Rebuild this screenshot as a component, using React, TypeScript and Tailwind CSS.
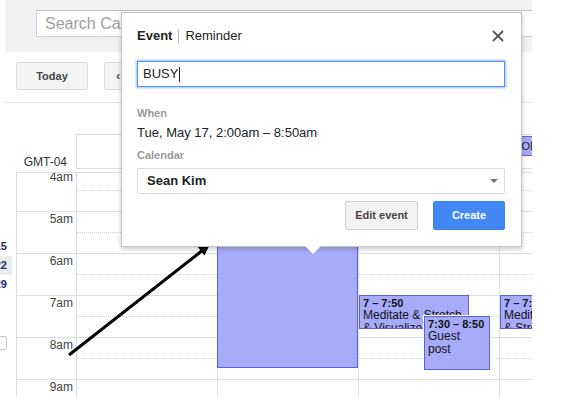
import React from "react";

const HOURS = ["4am", "5am", "6am", "7am", "8am", "9am"];
const MINI_DAYS = [
  { day: "15", current: false },
  { day: "22", current: true },
  { day: "29", current: false },
];

function HourRow({ label }: { label: string }) {
  return (
    <div className="flex h-[42px] border-t border-[#dddddd]">
      <div className="w-[59px] shrink-0 pr-[3px] text-right text-[12px] leading-[14px] text-[#444]">{label}</div>
      {[0, 1, 2, 3].map((i) => (
        <div key={i} className="w-[141px] shrink-0 border-l border-[#dddddd]">
          <div className="mt-[20px] border-t border-dotted border-[#d4d4d4]" />
        </div>
      ))}
    </div>
  );
}

function CalendarEvent({
  className,
  time,
  title,
}: {
  className: string;
  time: string;
  title: string;
}) {
  return (
    <div
      className={`absolute overflow-hidden border border-[#5a60d8] bg-[#a7acfa] px-[3px] text-[#111] ${className}`}
    >
      <div className="mt-[1px] text-[11px] font-bold leading-[12px]">{time}</div>
      <div className="text-[12px] leading-[13px]">{title}</div>
    </div>
  );
}

export default function App() {
  return (
    <div className="relative h-[397px] w-[561px] overflow-hidden bg-white font-['Liberation_Sans',Arial,sans-serif]">
      {/* search band */}
      <div className="ml-[5px] h-[52px] w-[527px] overflow-hidden bg-[#f1f1f1] pl-[31px] pt-[10px]">
        <div className="h-[27px] w-[520px] border border-[#d4d4d4] border-t-[#c0c0c0] bg-white pl-[8px] text-[16px] leading-[25px] text-[#9e9e9e]">
          Search Calendar
        </div>
      </div>

      {/* toolbar */}
      <div className="ml-[5px] flex h-[51px] w-[527px] items-start gap-[16px] border-b border-[#e5e5e5] pl-[11px] pt-[10px]">
        <div className="flex h-[28px] w-[72px] items-center justify-center rounded-[2px] border border-[#dcdcdc] bg-[#f4f4f4] text-[11px] font-bold text-[#444]">
          Today
        </div>
        <div className="flex h-[28px] w-[60px] items-center rounded-[2px] border border-[#dcdcdc] bg-[#f4f4f4] pl-[11px] text-[13px] font-bold text-[#555]">
          ‹
        </div>
      </div>

      <div className="flex">
        {/* mini calendar edge */}
        <div className="w-[16px] shrink-0 overflow-hidden">
          <div className="mt-[134px] flex flex-col">
            {MINI_DAYS.map((d) => (
              <div
                key={d.day}
                className={`-ml-[6px] h-[19px] w-[18px] pr-[5px] text-right text-[11px] font-bold leading-[19px] text-[#1f2a70] ${
                  d.current ? "bg-[#ebebeb]" : ""
                }`}
              >
                {d.day}
              </div>
            ))}
            <div className="-ml-[12px] mt-[42px] h-[14px] w-[19px] rounded-[2px] border border-[#c8c8c8]" />
          </div>
        </div>

        <div className="w-[516px] shrink-0 overflow-hidden">
          {/* header */}
          <div className="flex h-[69px]">
            <div className="flex w-[60px] shrink-0 items-end justify-end pb-[3px] pr-[9px] text-[12px] leading-[14px] text-[#333]">
              GMT-04
            </div>
            <div className="flex-1 pt-[31px]">
              <div className="relative h-[35px] overflow-hidden border-y border-l border-[#dddddd]">
                <div className="absolute left-[423px] top-[1px] h-[20px] w-[60px] overflow-hidden border border-[#5a60d8] bg-[#a7acfa] pl-[14px] text-[11px] leading-[18px] text-[#222]">
                  TODO
                </div>
              </div>
            </div>
          </div>

          {/* time grid */}
          <div className="h-[225px] overflow-hidden border-l border-t border-[#dddddd]">
            <div className="relative -mt-[4px]">
              {HOURS.map((h) => (
                <HourRow key={h} label={h} />
              ))}

              <div className="absolute left-[200px] top-[-80px] h-[279px] w-[141px] border border-[#5a60d8] bg-[#a7acfa]" />
              <CalendarEvent
                className="left-[342px] top-[126px] h-[34px] w-[110px]"
                time="7 – 7:50"
                title="Meditate & Stretch & Visualize"
              />
              <CalendarEvent
                className="left-[407px] top-[147px] h-[54px] w-[66px] outline outline-1 outline-white"
                time="7:30 – 8:50"
                title="Guest post"
              />
              <CalendarEvent
                className="left-[483px] top-[126px] h-[34px] w-[60px]"
                time="7 – 7:50"
                title="Meditate & Stretch & Visualize"
              />
            </div>
          </div>
        </div>
      </div>

      {/* arrow */}
      <svg className="pointer-events-none absolute left-0 top-0" width="561" height="397">
        <line x1="69" y1="355" x2="203" y2="250" stroke="#000" strokeWidth="3" />
        <polygon points="210,244 204.5,255.5 197,246" fill="#000" />
      </svg>

      {/* quick add popup */}
      <div className="absolute left-[121px] top-[12px] h-[235px] w-[401px] border border-[#c4c4c4] bg-white px-[15px] pt-[15px] shadow-[0_2px_5px_rgba(0,0,0,0.22)]">
        <div className="flex h-[16px] items-center text-[13px] leading-[16px] text-[#222]">
          <span className="font-bold">Event</span>
          <span className="mx-[6px] h-[15px] w-px bg-[#bbb]" />
          <span>Reminder</span>
          <svg className="ml-auto mr-[2px]" width="12" height="12" viewBox="0 0 12 12">
            <path d="M1 1 L11 11 M11 1 L1 11" stroke="#555" strokeWidth="1.8" />
          </svg>
        </div>

        <div className="mt-[17px] flex h-[26px] w-[368px] items-center border border-[#4d90fe] pl-[5px] text-[13px] text-[#222] shadow-[0_0_2px_1px_rgba(77,144,254,0.55)]">
          BUSY
          <span className="ml-[1px] h-[15px] w-px bg-[#222]" />
        </div>

        <div className="mt-[20px] text-[11px] font-bold leading-[13px] text-[#999]">When</div>
        <div className="mt-[5px] text-[13px] leading-[16px] text-[#222]">Tue, May 17, 2:00am – 8:50am</div>

        <div className="mt-[8px] text-[11px] font-bold leading-[13px] text-[#999]">Calendar</div>
        <div className="mt-[6px] flex h-[26px] w-[368px] items-center rounded-[2px] border border-[#dcdcdc] pl-[9px] pr-[6px] text-[13px] font-bold text-[#222]">
          Sean Kim
          <span className="ml-auto h-0 w-0 border-x-[4px] border-t-[4px] border-x-transparent border-t-[#777]" />
        </div>

        <div className="mt-[7px] flex w-[368px] justify-end gap-[15px]">
          <div className="flex h-[29px] w-[73px] items-center justify-center rounded-[2px] border border-[#d0d0d0] bg-[#f3f3f3] text-[11px] font-bold text-[#444]">
            Edit event
          </div>
          <div className="flex h-[29px] w-[72px] items-center justify-center rounded-[2px] border border-[#3b82f0] bg-[#4288f5] text-[11px] font-bold text-white">
            Create
          </div>
        </div>

        <div className="absolute left-[183px] top-[233px] h-0 w-0 border-x-[8px] border-t-[8px] border-x-transparent border-t-white" />
      </div>
    </div>
  );
}
